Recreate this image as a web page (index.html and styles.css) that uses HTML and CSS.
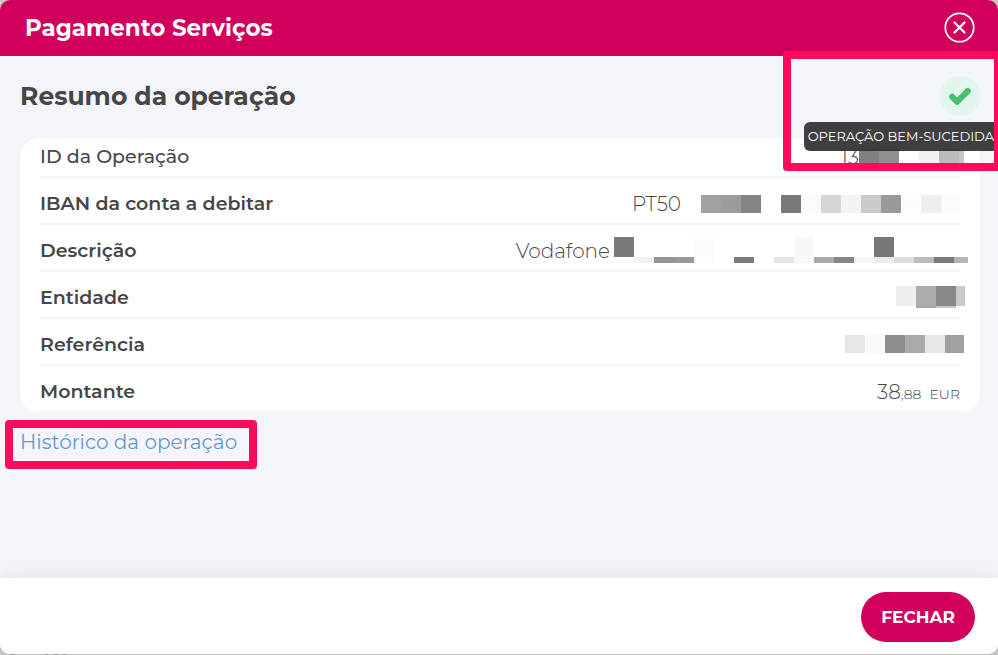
FILE: index.html
```html
<!DOCTYPE html>
<html lang="pt">
<head>
    <meta charset="UTF-8">
    <meta name="viewport" content="width=device-width, initial-scale=1.0">
    <title>Pagamento Serviços</title>
    <link rel="stylesheet" href="styles.css">
</head>
<body>
    <div class="modal">
        <header class="modal-header">
            <h1>Pagamento Serviços</h1>
            <button type="button" class="close" aria-label="Fechar janela">
                <svg width="31" height="31" viewBox="0 0 31 31" fill="none" stroke="#fff">
                    <circle cx="15.5" cy="15.5" r="14.2" stroke-width="1.8"/>
                    <path d="M10.5 10.5l10 10M20.5 10.5l-10 10" stroke-width="2.4" stroke-linecap="round"/>
                </svg>
            </button>
        </header>

        <main class="modal-body">
            <div class="summary-head">
                <h2>Resumo da operação</h2>
                <div class="status" aria-describedby="status-tip">
                    <svg width="40" height="40" viewBox="0 0 40 40" fill="none">
                        <circle cx="20" cy="20" r="20" fill="#e2f6ee"/>
                        <path d="M12.2 20.8l4.7 5L27.8 15" stroke="#45c06b" stroke-width="6" stroke-linecap="round" stroke-linejoin="round"/>
                    </svg>
                    <span class="tooltip" id="status-tip" role="tooltip">OPERAÇÃO BEM-SUCEDIDA</span>
                    <span class="mark mark-status"></span>
                </div>
            </div>

            <dl class="details">
                <div class="row">
                    <dt>ID da Operação</dt>
                    <dd>13
                        <svg class="mask" width="101" height="16">
                            <rect width="20" height="14" fill="#808080"/>
                            <rect x="20" width="20" height="14" fill="#8f8f8f"/>
                            <rect x="60" width="20" height="14" fill="#f1f1f1"/>
                            <rect x="80" width="20" height="14" fill="#bbb"/>
                            <rect x="100" width="5" height="14" fill="#c6c6c6"/>
                        </svg>
                    </dd>
                </div>
                <div class="row">
                    <dt>IBAN da conta a debitar</dt>
                    <dd>PT50
                        <svg class="mask" width="279" height="18">
                            <rect x="20" width="20" height="18" fill="#a0a0a0"/>
                            <rect x="40" width="20" height="18" fill="#9c9c9c"/>
                            <rect x="60" width="20" height="18" fill="#848484"/>
                            <rect x="100" width="20" height="18" fill="#7a7a7a"/>
                            <rect x="120" width="20" height="18" fill="#fafafa"/>
                            <rect x="140" width="20" height="18" fill="#d6d6d6"/>
                            <rect x="160" width="20" height="18" fill="#f3f3f3"/>
                            <rect x="180" width="20" height="18" fill="#cacaca"/>
                            <rect x="200" width="20" height="18" fill="#999"/>
                            <rect x="220" width="20" height="18" fill="#fcfcfc"/>
                            <rect x="240" width="20" height="18" fill="#eee"/>
                            <rect x="260" width="19" height="18" fill="#fafafa"/>
                        </svg>
                    </dd>
                </div>
                <div class="row">
                    <dt>Descrição</dt>
                    <dd>Vodafone
                        <svg class="mask" width="350" height="28">
                            <rect x="4" width="20" height="20" fill="#7a7a7a"/>
                            <rect x="24" y="20" width="20" height="6" fill="#f0f0f0"/>
                            <rect x="44" y="20" width="20" height="6" fill="#939393"/>
                            <rect x="64" y="20" width="20" height="6" fill="#989898"/>
                            <rect x="84" width="20" height="26" fill="#fcfcfc"/>
                            <rect x="124" y="20" width="20" height="6" fill="#7a7a7a"/>
                            <rect x="164" y="20" width="20" height="6" fill="#e6e6e6"/>
                            <rect x="184" width="20" height="26" fill="#f8f8f8"/>
                            <rect x="204" y="20" width="20" height="6" fill="#aaa"/>
                            <rect x="224" y="20" width="20" height="6" fill="#848484"/>
                            <rect x="244" y="20" width="20" height="6" fill="#f6f6f6"/>
                            <rect x="264" width="20" height="20" fill="#777"/>
                            <rect x="264" y="20" width="20" height="6" fill="#ebebeb"/>
                            <rect x="284" y="20" width="20" height="6" fill="#ddd"/>
                            <rect x="304" y="20" width="20" height="6" fill="#bbb"/>
                            <rect x="324" y="20" width="20" height="6" fill="#7a7a7a"/>
                            <rect x="344" y="20" width="14" height="6" fill="#b5b5b5"/>
                        </svg>
                    </dd>
                </div>
                <div class="row">
                    <dt>Entidade</dt>
                    <dd>
                        <svg class="mask" width="64" height="24">
                            <rect width="20" height="20" fill="#eee"/>
                            <rect x="20" width="20" height="20" fill="#adadad"/>
                            <rect x="40" width="20" height="20" fill="#888"/>
                            <rect x="60" width="9" height="20" fill="#c9c9c9"/>
                            <rect x="20" y="20" width="20" height="2" fill="#a6a6a6"/>
                            <rect x="40" y="20" width="20" height="2" fill="#c6c6c6"/>
                        </svg>
                    </dd>
                </div>
                <div class="row">
                    <dt>Referência</dt>
                    <dd>
                        <svg class="mask" width="115" height="20">
                            <rect width="20" height="18" fill="#e6e6e6"/>
                            <rect x="20" width="20" height="18" fill="#f9f9f9"/>
                            <rect x="40" width="20" height="18" fill="#8d8d8d"/>
                            <rect x="60" width="20" height="18" fill="#ababab"/>
                            <rect x="80" width="20" height="18" fill="#e8e8e8"/>
                            <rect x="100" width="19" height="18" fill="#a0a0a0"/>
                        </svg>
                    </dd>
                </div>
                <div class="row">
                    <dt>Montante</dt>
                    <dd class="amount">38<span class="cents">,88</span><span class="currency">EUR</span></dd>
                </div>
            </dl>

            <div class="history">
                <a href="#historico">Histórico da operação</a>
                <span class="mark mark-history"></span>
            </div>
        </main>

        <footer class="modal-footer">
            <button type="button" class="btn">FECHAR</button>
        </footer>
    </div>
</body>
</html>
```
FILE: styles.css
```css
/* Basic Reset */
* {
    margin: 0;
    padding: 0;
    box-sizing: border-box;
}

body {
    font-family: Montserrat, Inter, sans-serif;
    color: #464646;
    /* bits of the page behind that show under the modal */
    background: #c8c8c8 linear-gradient(90deg, transparent 10px, #d088a4 10px 15px, transparent 15px 45px, #d088a4 45px 48px, transparent 48px 54px, #d088a4 54px 58px, transparent 58px 63px, #d088a4 63px 66px, transparent 66px) left bottom / 100% 1px no-repeat;
    overflow: hidden;
}

svg {
    display: block;
}

.modal {
    display: flex;
    flex-direction: column;
    min-height: calc(100vh - 1px);
    margin-bottom: 1px;
    border-radius: 10px;
    background-color: #f4f5fa;
}

/* Header */
.modal-header {
    display: flex;
    align-items: center;
    justify-content: space-between;
    height: 56px;
    padding: 0 23px 1px 25px;
    border-radius: 10px 10px 0 0;
    background-color: #d1005d;
    color: #fff;
}

.modal-header h1 {
    font-size: 23px;
    line-height: 32px;
    font-weight: 700;
}

.close {
    border: none;
    background: none;
    cursor: pointer;
}

/* Content */
.modal-body {
    flex: 1;
    padding: 20px 18px 20px 20px;
}

.summary-head {
    display: flex;
    align-items: center;
    justify-content: space-between;
    margin-bottom: 22px;
}

.summary-head h2 {
    font-size: 25px;
    line-height: 40px;
    font-weight: 700;
}

.status {
    position: relative;
}

.tooltip {
    position: absolute;
    top: 46px;
    right: -18px;
    padding: 0 4px;
    border-radius: 6px 0 0 6px;
    background-color: rgba(48, 48, 48, 0.93);
    color: #fff;
    font-size: 13px;
    line-height: 29px;
    white-space: nowrap;
}

.details {
    padding: 0 20px;
    border-radius: 20px;
    background-color: #fff;
}

.row {
    display: flex;
    justify-content: space-between;
    padding: 12px 0 5px;
    border-bottom: 2px solid #f4f5fa;
    font-size: 20px;
    line-height: 28px;
}

.row:first-child {
    padding-top: 5px;
}

.row:last-child {
    padding-bottom: 3px;
}

.row dt {
    font-size: 19px;
    font-weight: 600;
}

.row:first-child dt {
    font-weight: 500;
}

.row dd {
    display: flex;
    align-items: center;
    font-weight: 300;
}

.mask {
    overflow: visible;
}

.row .amount {
    align-items: baseline;
}

.cents,
.currency {
    font-size: 14px;
}

.currency {
    margin-left: 8px;
}

/* History link */
.history {
    position: relative;
    width: max-content;
    padding-top: 16px;
}

.history a {
    display: block;
    color: #6699d3;
    font-size: 20px;
    line-height: 26px;
    text-decoration: none;
}

/* Highlight frames */
.mark {
    position: absolute;
    border: 8px solid #ff0b5b;
    border-radius: 4px;
    pointer-events: none;
}

.mark-status {
    top: -25px;
    right: -22px;
    width: 219px;
    height: 120px;
}

.mark-history {
    top: 7px;
    left: -15px;
    right: -20px;
    height: 49px;
}

/* Footer */
.modal-footer {
    display: flex;
    justify-content: flex-end;
    padding: 14px 23px 12px;
    border-radius: 0 0 10px 10px;
    background-color: #fff;
    box-shadow: 0 -2px 20px rgba(0, 0, 0, 0.08);
}

.btn {
    padding: 0 20px;
    border: none;
    border-radius: 25px;
    background-color: #d1005d;
    color: #fff;
    font-family: inherit;
    font-size: 17px;
    font-weight: 700;
    line-height: 50px;
    cursor: pointer;
}
```
